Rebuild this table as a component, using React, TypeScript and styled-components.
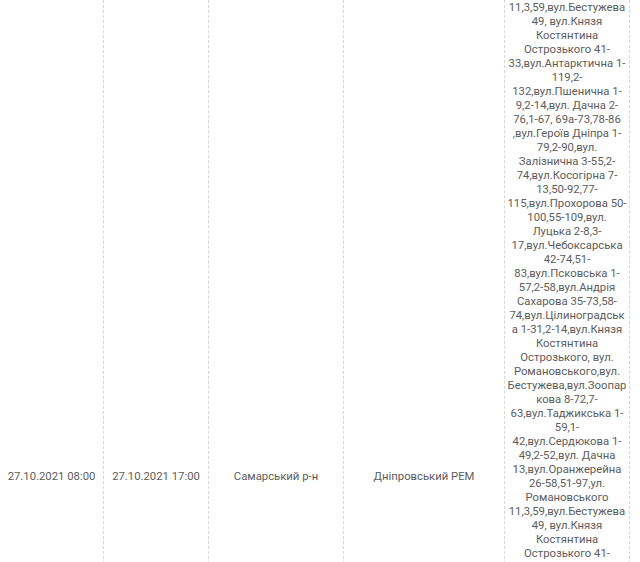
import styled, { createGlobalStyle } from 'styled-components';

const GlobalStyle = createGlobalStyle`
  html, body {
    margin: 0;
    padding: 0;
    background: #fff;
  }
  body {
    font-family: Roboto, "Liberation Sans", Arial, sans-serif;
  }
`;

const addressCycle =
  '11,3,59,вул.Бестужева 49, вул.Князя Костянтина Острозького 41-33,вул.Антарктична 1-119,2-132,вул.Пшенична 1-9,2-14,вул. Дачна 2-76,1-67, 69а-73,78-86 ,вул.Героїв Дніпра 1-79,2-90,вул. Залізнична 3-55,2-74,вул.Косогірна 7-13,50-92,77-115,вул.Прохорова 50-100,55-109,вул. Луцька 2-8,3-17,вул.Чебоксарська 42-74,51-83,вул.Псковська 1-57,2-58,вул.Андрія Сахарова 35-73,58-74,вул.Цілиноградська 1-31,2-14,вул.Князя Костянтина Острозького, вул. Романовського,вул. Бестужева,вул.Зоопаркова 8-72,7-63,вул.Таджикська 1-59,1-42,вул.Сердюкова';

const addressTail =
  ' 1-49,2-52,вул. Дачна 13,вул.Оранжерейна 26-58,51-97,ул. Романовського ';

const outage = {
  start: '27.10.2021 08:00',
  end: '27.10.2021 17:00',
  district: 'Самарський р-н',
  rem: 'Дніпровський РЕМ',
  addresses: addressCycle + addressTail + addressCycle,
};

const App = () => {
  return (
    <>
      <GlobalStyle />
      <Table>
        <tbody>
          <Row>
            <Cell $width={104}>{outage.start}</Cell>
            <Cell $width={105}>{outage.end}</Cell>
            <Cell $width={135}>{outage.district}</Cell>
            <Cell $width={161}>{outage.rem}</Cell>
            <AddressCell $width={125}>{outage.addresses}</AddressCell>
          </Row>
        </tbody>
      </Table>
    </>
  );
};

const Table = styled.table`
  table-layout: fixed;
  border-collapse: separate;
  border-spacing: 0;
  width: 630px;
`;

const Row = styled.tr`
  vertical-align: middle;
`;

const Cell = styled.td<{ $width: number }>`
  box-sizing: border-box;
  width: ${(p) => p.$width}px;
  padding: 1px 2px;
  border-right: 1px dashed #d6d6d6;
  border-bottom: 1px dashed #d6d6d6;
  text-align: center;
  font-size: 11.3px;
  line-height: 14px;
  color: #5c5c5c;
`;

const AddressCell = styled(Cell)`
  overflow-wrap: break-word;
  word-wrap: break-word;
`;

export default App;
